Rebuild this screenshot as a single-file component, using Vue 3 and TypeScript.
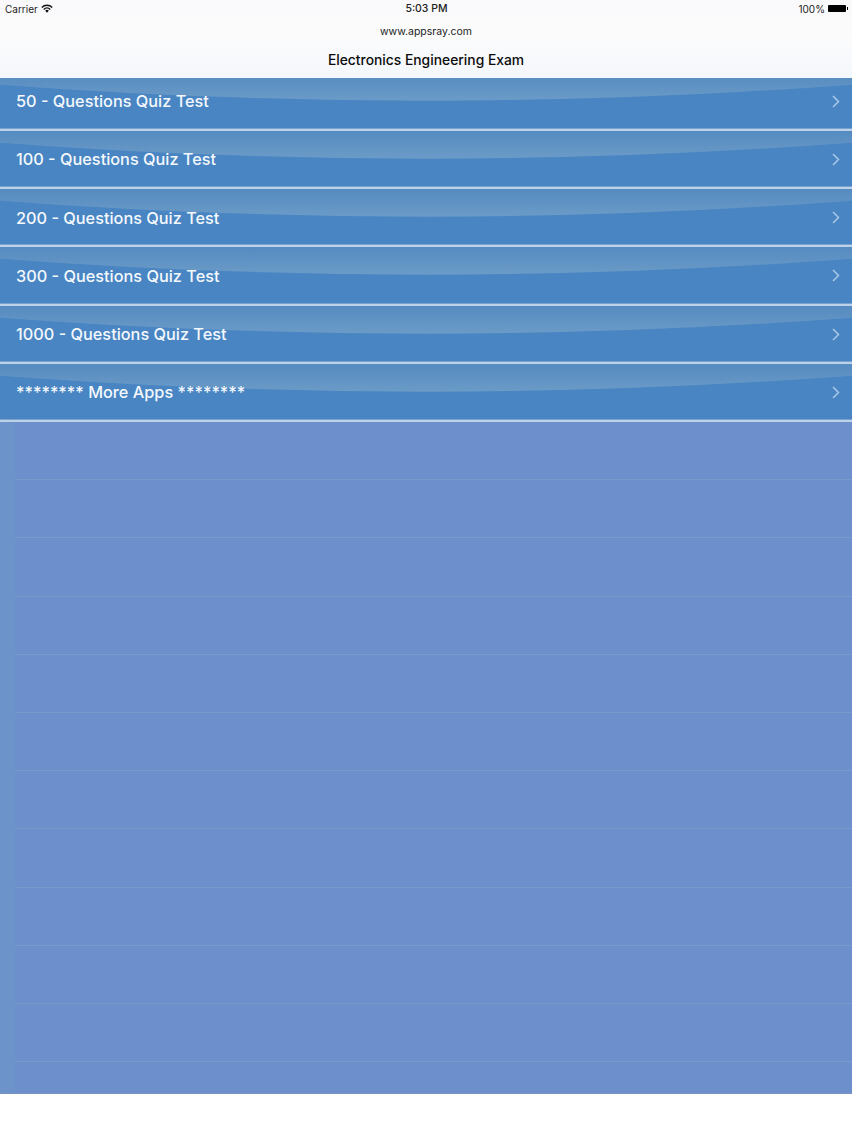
<script setup lang="ts">
const items: string[] = [
  '50 - Questions Quiz Test',
  '100 - Questions Quiz Test',
  '200 - Questions Quiz Test',
  '300 - Questions Quiz Test',
  '1000 - Questions Quiz Test',
  '******** More Apps ********',
]
const blanks: number[] = Array.from({ length: 11 }, (_, i) => i)
</script>

<template>
  <div class="page">
    <header class="nav">
      <div class="status">
        <div class="status-left">
          <span>Carrier</span>
          <svg class="wifi" width="12" height="9" viewBox="0 0 12 9">
            <path d="M0.3 2.9A8 8 0 0 1 11.7 2.9L10.7 3.9A6.6 6.6 0 0 0 1.3 3.9Z" fill="#111" />
            <path d="M2.3 4.9A5.2 5.2 0 0 1 9.7 4.9L8.7 5.9A3.8 3.8 0 0 0 3.3 5.9Z" fill="#111" />
            <path d="M4.2 6.8A2.5 2.5 0 0 1 7.8 6.8L6 8.7Z" fill="#111" />
          </svg>
        </div>
        <span class="time">5:03 PM</span>
        <div class="status-right">
          <span>100%</span>
          <span class="battery"><span class="battery-tip"></span></span>
        </div>
      </div>
      <div class="site">www.appsray.com</div>
      <div class="title">Electronics Engineering Exam</div>
    </header>

    <main class="table">
      <div v-for="item in items" :key="item" class="row">
        <svg class="lens" viewBox="0 0 852 58" preserveAspectRatio="none">
          <defs>
            <linearGradient id="lensFill" x1="0" y1="0" x2="0" y2="1">
              <stop offset="0" stop-color="#558bc1" />
              <stop offset="1" stop-color="#6b9bc7" />
            </linearGradient>
          </defs>
          <path d="M0 0H852V12Q426 45 0 12Z" fill="url(#lensFill)" />
        </svg>
        <span class="label">{{ item }}</span>
        <svg class="chevron" width="8" height="13" viewBox="0 0 8 13">
          <path d="M1 1L6.5 6.5L1 12" fill="none" stroke="#a9c8e8" stroke-width="1.5" />
        </svg>
      </div>
      <div v-for="n in blanks" :key="n" class="blank"></div>
      <div class="tail"></div>
    </main>
  </div>
</template>

<style>
body { background: #fff; }
</style>

<style scoped>
.page {
  position: relative;
  width: 852px;
  height: 1136px;
  overflow: hidden;
  background: #fff;
  font-family: Inter, "Liberation Sans", sans-serif;
}
.nav {
  position: absolute;
  top: 0;
  left: 0;
  right: 0;
  z-index: 2;
  height: 78px;
  background: linear-gradient(#f9f9fb 0%, #fcfcfd 45%, #f6f8fb 85%, #f4f8fd 100%);
  color: #111;
  text-align: center;
}
.status {
  display: flex;
  justify-content: space-between;
  align-items: center;
  height: 17px;
  padding: 0 5px;
  font-size: 10px;
  color: #222;
}
.status-left, .status-right {
  display: flex;
  align-items: center;
  gap: 3px;
  width: 120px;
}
.status-right { justify-content: flex-end; gap: 3px; }
.time { font-weight: 500; font-size: 10.5px; margin-left: 1px; }
.battery {
  position: relative;
  width: 18px;
  height: 7px;
  margin-right: 1px;
  background: #000;
  border-radius: 1px;
}
.battery-tip {
  position: absolute;
  top: 2px;
  right: -2px;
  width: 1px;
  height: 3px;
  background: #000;
}
.site {
  margin-top: 7px;
  font-size: 10.5px;
  line-height: 15px;
  color: #222;
}
.title {
  margin-top: 11px;
  font-size: 13.85px;
  line-height: 20px;
  font-weight: 500;
  color: #0b0b0b;
}
.table {
  position: absolute;
  top: 72.5px;
  left: 0;
  right: 0;
  height: 1020.5px;
  background: linear-gradient(90deg, #6c94cb 0, #6c94cb 14px, #6d90cd 15px);
  display: flex;
  flex-direction: column;
  border-bottom: 1px solid #7b93c4;
  box-sizing: content-box;
}
.row {
  position: relative;
  flex: none;
  height: 58.25px;
  box-sizing: border-box;
  display: flex;
  align-items: center;
  justify-content: space-between;
  padding: 1px 12px 0 16px;
  background: #4885c2;
  border-bottom: 2px solid #bdd2e8;
}
.row::after {
  content: "";
  position: absolute;
  left: 0;
  right: 0;
  bottom: 0;
  height: 1px;
  background: #78a2d0;
}
.lens {
  position: absolute;
  top: 0;
  left: 0;
  width: 100%;
  height: 100%;
}
.label {
  position: relative;
  font-size: 16.3px;
  font-weight: 500;
  color: #f4f8fc;
}
.chevron { position: relative; }
.blank {
  flex: none;
  height: 58.2px;
  box-sizing: border-box;
  margin-left: 15px;
  border-bottom: 1px solid #7a9bc9;
}
.tail { flex: 1; }
</style>
